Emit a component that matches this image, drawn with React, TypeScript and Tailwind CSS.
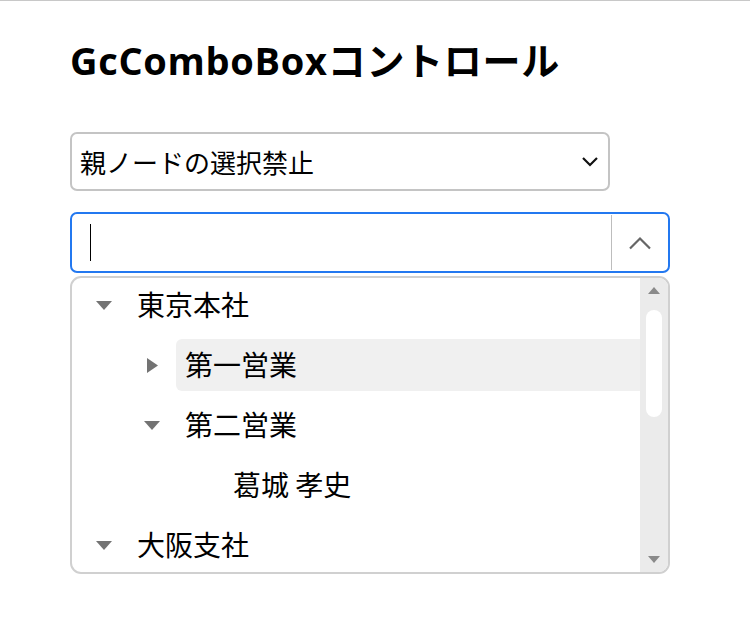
import React from 'react'

type Node = { label: string; level: number; toggle?: 'open' | 'closed'; active?: boolean }

const nodes: Node[] = [
  { label: '東京本社', level: 0, toggle: 'open' },
  { label: '第一営業', level: 1, toggle: 'closed', active: true },
  { label: '第二営業', level: 1, toggle: 'open' },
  { label: '葛城 孝史', level: 2 },
  { label: '大阪支社', level: 0, toggle: 'open' },
]

function Toggle({ kind }: { kind?: 'open' | 'closed' }) {
  return (
    <div className="w-12 h-full flex items-center justify-center shrink-0">
      {kind === 'open' && (
        <svg width="16" height="9" viewBox="0 0 16 9"><polygon points="0,0 16,0 8,9" fill="#737373" /></svg>
      )}
      {kind === 'closed' && (
        <svg width="11" height="15" viewBox="0 0 11 15"><polygon points="0,0 11,7.5 0,15" fill="#737373" /></svg>
      )}
    </div>
  )
}

export default function App() {
  return (
    <div className="min-h-[620px] bg-white border-t border-[#c8c8c8] text-black" style={{ fontFamily: '"Noto Sans CJK JP", sans-serif' }}>
      <div className="pl-[70px] pt-[34px]">
        <h1 className="text-[38px] font-bold leading-[50px] h-[50px] tracking-[0.7px]" style={{ fontFamily: '"Open Sans", "Noto Sans CJK JP", sans-serif' }}>GcComboBoxコントロール</h1>

        {/* select */}
        <div className="mt-[47px] w-[540px] h-[59px] border-2 border-[#c4c4c4] rounded-[7px] flex items-center justify-between pl-[8px] pr-[8px]">
          <span className="text-[26px] leading-none">親ノードの選択禁止</span>
          <svg width="18" height="12" viewBox="0 0 18 12" className="mr-[1px]">
            <polyline points="2,2 9,9 16,2" fill="none" stroke="#111" strokeWidth="2.2" />
          </svg>
        </div>

        {/* combo input */}
        <div className="mt-[21px] w-[600px] h-[61px] border-2 border-[#2378f0] rounded-[7px] flex">
          <div className="flex-1 flex items-center pl-[18px]">
            <div className="w-px h-[37px] bg-black" />
          </div>
          <div className="w-[1.5px] bg-[#bdbdbd] my-[1px]" />
          <div className="w-[56px] flex items-center justify-center">
            <svg width="22" height="14" viewBox="0 0 22 14">
              <polyline points="1,12.5 11,2.5 21,12.5" fill="none" stroke="#666" strokeWidth="2.2" />
            </svg>
          </div>
        </div>

        {/* dropdown tree */}
        <div className="mt-[3px] w-[600px] h-[298px] border-2 border-[#d0d0d0] rounded-[11px] overflow-hidden flex">
          <div className="flex-1 pl-[8px] overflow-hidden">
            <div className="-mt-[3px]">
              {nodes.map((n) => (
                <div key={n.label} className={`h-[60px] flex ${n.level === 0 ? '' : n.level === 1 ? 'pl-12' : 'pl-24'}`}>
                  <Toggle kind={n.toggle} />
                  <div className={`flex-1 my-[4px] flex items-center pl-[9px] pb-[3px] rounded-l-[6px] ${n.active ? 'bg-[#f0f0f0]' : ''}`}>
                    <span className="text-[28px] leading-none">{n.label}</span>
                  </div>
                </div>
              ))}
            </div>
          </div>
          <div className="w-[28px] bg-[#ebebeb] flex flex-col items-center pt-[9px] pb-[9px]">
            <svg width="12" height="7" viewBox="0 0 12 7"><polygon points="6,0 12,7 0,7" fill="#8a8a8a" /></svg>
            <div className="mt-[16px] w-[16px] h-[107px] bg-white rounded-full" />
            <div className="flex-1" />
            <svg width="12" height="7" viewBox="0 0 12 7"><polygon points="0,0 12,0 6,7" fill="#8a8a8a" /></svg>
          </div>
        </div>
      </div>
    </div>
  )
}
